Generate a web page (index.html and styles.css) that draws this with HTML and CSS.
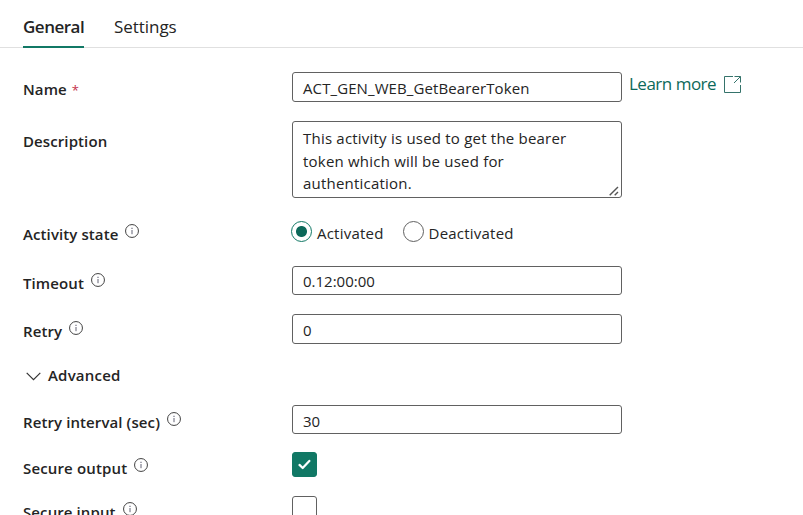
FILE: index.html
```html
<!DOCTYPE html>
<html lang="en">
<head>
<meta charset="utf-8">
<title>Activity settings</title>
<link rel="stylesheet" href="styles.css">
</head>
<body>
<svg class="defs" width="0" height="0" aria-hidden="true">
  <symbol id="info" viewBox="0 0 14 14">
    <circle cx="7" cy="7" r="6.45" fill="none" stroke="#424242" stroke-width="1"/>
    <path d="M7 6v4.2" stroke="#626275" stroke-width="1"/>
    <path d="M7 3.8v1.1" stroke="#626275" stroke-width="1.1"/>
  </symbol>
</svg>
<nav class="tabs">
  <a class="tab active">General</a>
  <a class="tab">Settings</a>
</nav>
<main class="form">
  <div class="row name">
    <label class="label">Name <span class="required">*</span></label>
    <div class="input title">ACT_GEN_WEB_GetBearerToken</div>
    <a class="learn">Learn more
      <svg width="17" height="17" viewBox="0 0 17 17" fill="none" stroke="#35736b" stroke-width="1"><path d="M9 .5H.5v16h16V9M10.5.5h6v6M16.5.5 10 7"/></svg>
    </a>
  </div>
  <div class="row description">
    <label class="label">Description</label>
    <div class="textarea">This activity is used to get the bearer<br>token which will be used for<br>authentication.
      <svg class="grip" width="10" height="10" viewBox="0 0 10 10" stroke="#555" stroke-width="1.4"><path d="M.7 9.3 9 1M5.7 9.3 9 6"/></svg>
    </div>
  </div>
  <div class="row state">
    <label class="label">Activity state</label><svg class="info"><use href="#info"/></svg>
    <div class="radios">
      <span class="radio checked"></span><span class="option">Activated</span>
      <span class="radio"></span><span class="option">Deactivated</span>
    </div>
  </div>
  <div class="row timeout">
    <label class="label">Timeout</label><svg class="info"><use href="#info"/></svg>
    <div class="input">0.12:00:00</div>
  </div>
  <div class="row retry">
    <label class="label">Retry</label><svg class="info"><use href="#info"/></svg>
    <div class="input">0</div>
  </div>
  <div class="row advanced">
    <svg width="15" height="9" viewBox="0 0 15 9" fill="none" stroke="#333" stroke-width="1.2"><path d="M.7.8 7.5 7.6 14.3.8"/></svg>
    <span class="label">Advanced</span>
  </div>
  <div class="row interval">
    <label class="label">Retry interval (sec)</label><svg class="info"><use href="#info"/></svg>
    <div class="input">30</div>
  </div>
  <div class="row output">
    <label class="label">Secure output</label><svg class="info"><use href="#info"/></svg>
    <div class="check checked"><svg width="13" height="11" viewBox="0 0 13 11" fill="none" stroke="#fff" stroke-width="2.2" stroke-linecap="round" stroke-linejoin="round"><path d="M1.5 5.9 4.7 9 11.3 1.9"/></svg></div>
  </div>
  <div class="row secure-input">
    <label class="label">Secure input</label><svg class="info"><use href="#info"/></svg>
    <div class="check"></div>
  </div>
</main>
</body>
</html>
```
FILE: styles.css
```css
* { box-sizing: border-box; }
body {
  margin: 0;
  height: 515px;
  overflow: hidden;
  background: #fff;
  color: #242424;
  font: 15px/22px "Open Sans", "Noto Sans", sans-serif;
  white-space: nowrap;
}
.defs { position: absolute; }
.tabs {
  display: flex;
  gap: 30px;
  height: 48px;
  padding-left: 23px;
  border-bottom: 1px solid #e0e0e0;
}
.tab {
  height: 48px;
  padding-top: 15px;
  font-size: 17px;
  line-height: 24px;
  letter-spacing: -0.05px;
}
.tab.active {
  width: 61px;
  font-weight: 600;
  letter-spacing: -0.5px;
  border-bottom: 2px solid #117865;
}
.form { padding: 24px 0 0 23px; }
.row { display: flex; align-items: flex-start; }
.label { font-weight: 600; margin-top: 6px; letter-spacing: 0.1px; }
.required {
  margin-left: 1px;
  color: #c4314b;
  font-size: 13px;
  font-weight: 400;
  line-height: 1;
}
.info { width: 14px; height: 14px; margin-left: 7px; flex: none; }
.input, .textarea {
  width: 330px;
  border: 1px solid #616161;
  border-radius: 3px;
  padding: 0 10px;
}
.input, .textarea, .radios, .check { margin-left: auto; margin-right: 181px; flex: none; }
.input { height: 29px; line-height: 30px; }
.name { height: 30px; margin-bottom: 19px; }
.name .input { height: 30px; margin-right: 7px; line-height: 30px; letter-spacing: 0.1px; }
.learn {
  display: flex;
  gap: 8px;
  width: 174px;
  font-size: 17px;
  line-height: 24px;
  letter-spacing: -0.5px;
  color: #0c695a;
}
.learn svg { margin-top: 4px; }
.description { height: 77px; margin-bottom: 23px; }
.description .label { margin-top: 9px; }
.textarea {
  position: relative;
  height: 77px;
  padding-top: 5px;
  line-height: 22.5px;
  letter-spacing: 0.21px;
}
.grip { position: absolute; right: 2px; bottom: 1px; }
.state { height: 22px; margin-bottom: 23px; }
.state .label { margin-top: 2px; }
.state .info { margin-top: 3px; }
.radios { display: flex; width: 331px; }
.radio {
  width: 21px;
  height: 21px;
  border: 1px solid #616161;
  border-radius: 50%;
}
.radio.checked {
  border-color: #117865;
  background: radial-gradient(circle, #0c695a 0 5px, transparent 6px);
}
.option { margin: 1px 19px 0 5px; letter-spacing: 0.22px; }
.timeout { height: 29px; margin-bottom: 19px; }
.timeout .input { line-height: 28px; }
.timeout .info, .retry .info, .interval .info { margin-top: 7px; }
.retry { height: 30px; margin-bottom: 22px; }
.retry .input { height: 30px; line-height: 30px; }
.advanced { height: 20px; margin-bottom: 19px; }
.advanced svg { margin: 6px 7px 0 3px; }
.advanced .label { margin-top: -2px; letter-spacing: 0.2px; }
.interval { height: 29px; margin-bottom: 18px; }
.output { height: 25px; margin-bottom: 19px; }
.output .label, .secure-input .label { margin-top: 5px; }
.output .info, .secure-input .info { margin-top: 6px; }
.output .label { letter-spacing: 0.15px; }
.check {
  display: grid;
  place-items: center;
  width: 25px;
  height: 25px;
  border: 1px solid #616161;
  border-radius: 3px;
  margin-right: 486px;
}
.check.checked { background: #117865; border-color: #117865; }
```
